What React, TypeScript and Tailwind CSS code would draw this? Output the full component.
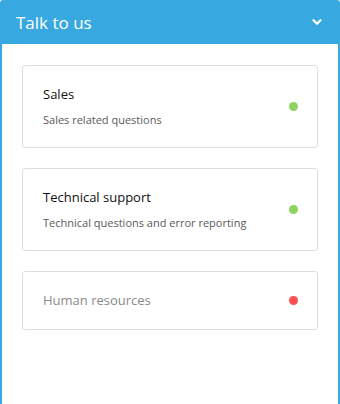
import { ChevronDown } from "lucide-react";

type Topic = {
  title: string;
  subtitle?: string;
  online: boolean;
};

const topics: Topic[] = [
  { title: "Sales", subtitle: "Sales related questions", online: true },
  { title: "Technical support", subtitle: "Technical questions and error reporting", online: true },
  { title: "Human resources", online: false },
];

function TopicCard({ topic }: { topic: Topic }) {
  return (
    <div
      className={
        topic.subtitle
          ? "flex items-center justify-between rounded-[3px] border border-[#dedede] bg-white px-5 py-[19px]"
          : "flex items-center justify-between rounded-[3px] border border-[#dedede] bg-white px-5 pt-[19px] pb-[20px]"
      }
    >
      <div className="flex flex-col">
        <span
          className={
            topic.subtitle
              ? "text-[13px] leading-[18px] text-[#111]"
              : "text-[13px] leading-[18px] text-[#8a8a8a]"
          }
        >
          {topic.title}
        </span>
        {topic.subtitle && (
          <span className="mt-[9px] text-[11px] leading-[16px] text-[#5a5a5a]">{topic.subtitle}</span>
        )}
      </div>
      <span
        className={
          topic.online
            ? "mr-[-1px] h-[9px] w-[9px] shrink-0 rounded-full bg-[#8ed462]"
            : "mr-[-1px] h-[9px] w-[9px] shrink-0 rounded-full bg-[#ff5050]"
        }
      />
    </div>
  );
}

export default function App() {
  return (
    <div
      className="flex h-[404px] w-[340px] flex-col overflow-hidden rounded-t-[3px] bg-[#38a9e0]"
      style={{ fontFamily: '"Open Sans", "Noto Sans", sans-serif' }}
    >
      <div className="flex h-[44px] shrink-0 items-center justify-between pl-4 pr-[16px]">
        <span className="text-[17px] leading-none text-white">Talk to us</span>
        <ChevronDown className="h-[14px] w-[14px] text-white" strokeWidth={4} />
      </div>
      <div className="mx-[2px] flex flex-1 flex-col gap-5 bg-white px-5 pt-[21px]">
        {topics.map(t => (
          <TopicCard key={t.title} topic={t} />
        ))}
      </div>
    </div>
  );
}
